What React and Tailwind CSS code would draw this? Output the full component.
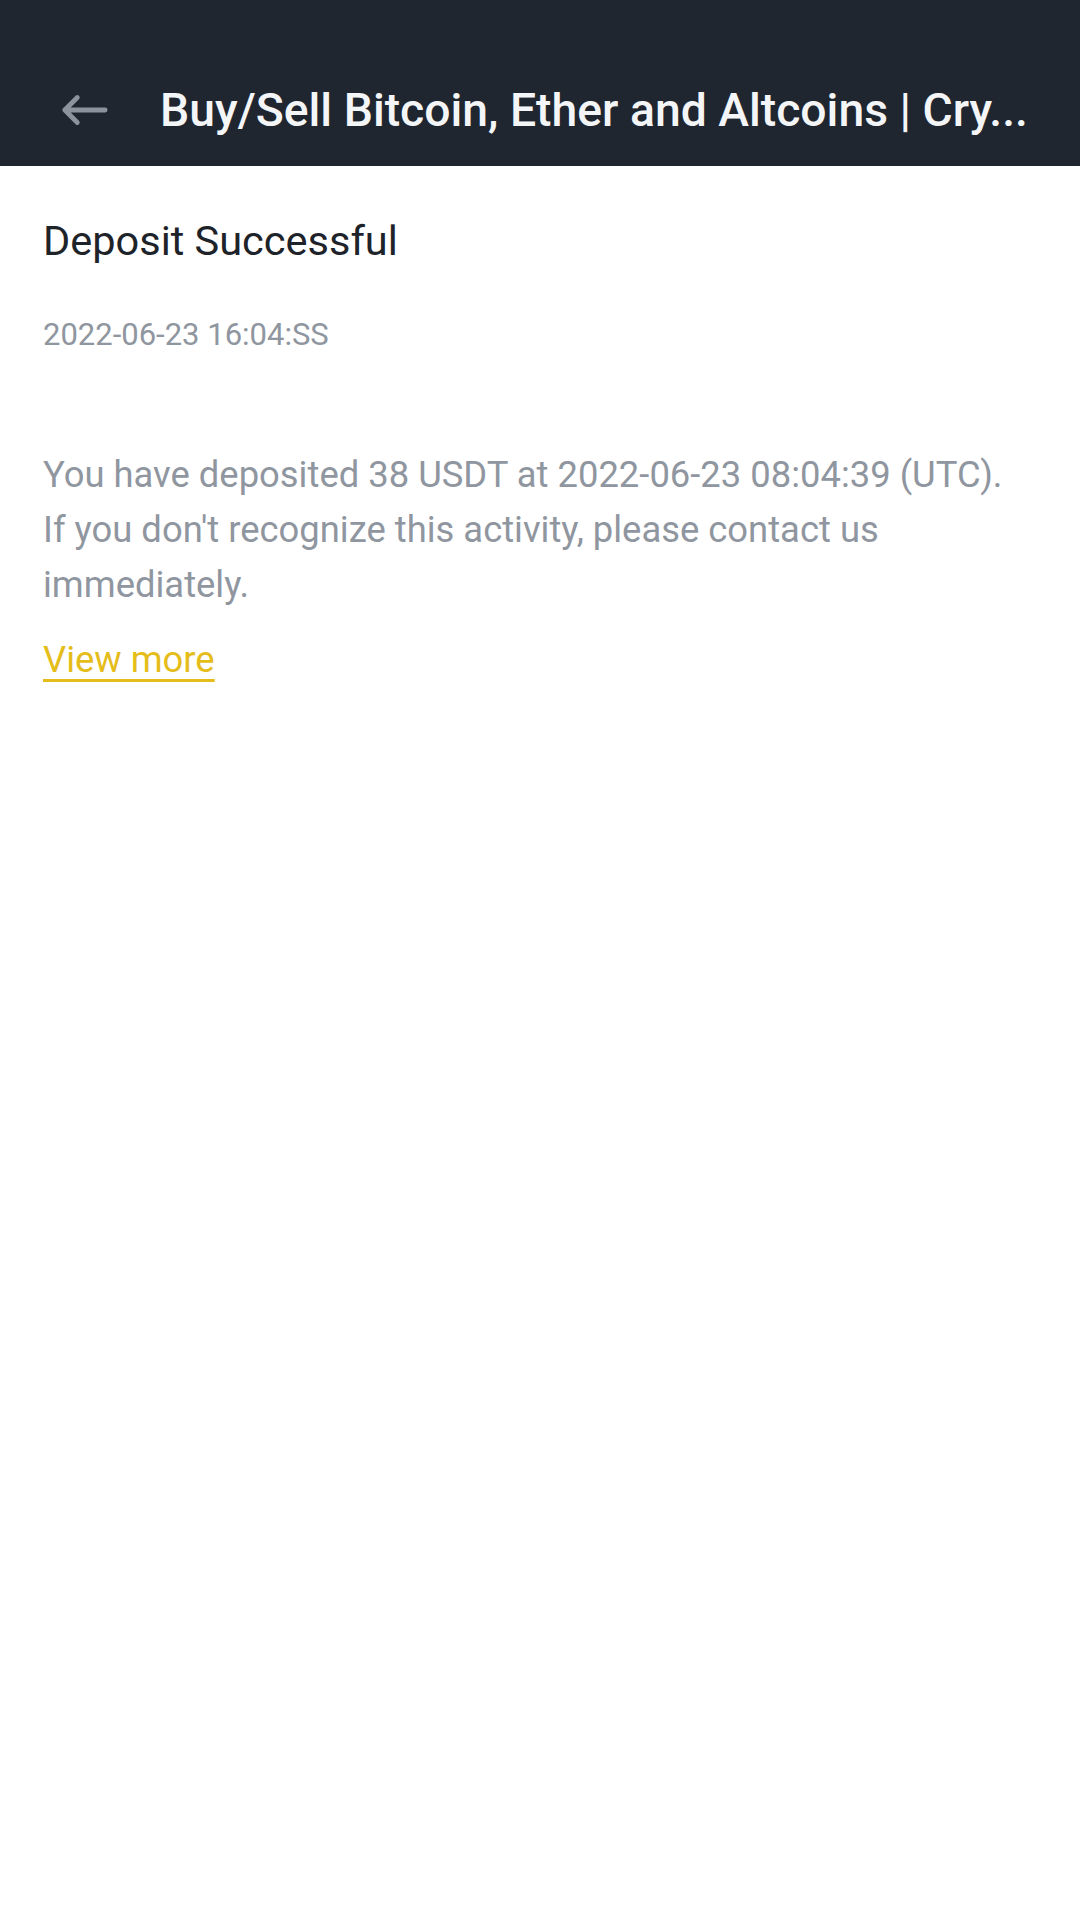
export default function App() {
  return (
    <div className="w-[1080px] h-[1920px] bg-white" style={{ fontFamily: '"Roboto", "Liberation Sans", sans-serif' }}>
      <div className="h-[166px] bg-[#1f2630] flex items-end">
        <div className="flex items-center h-[110px] w-full pb-[2px]">
          <div className="w-[160px] pl-[60px] flex items-center">
            <svg width="48" height="32" viewBox="0 0 50 32" fill="none">
              <path d="M47 16H5M18 3L5 16l13 13" stroke="#8d939c" strokeWidth="5" strokeLinecap="round" strokeLinejoin="round" />
            </svg>
          </div>
          <div className="text-[46.3px] font-medium text-[#f4f5f7] whitespace-nowrap leading-none">
            Buy/Sell Bitcoin, Ether and Altcoins | Cry...
          </div>
        </div>
      </div>
      <div className="px-[43px] pt-[50px]">
        <div className="text-[41.5px] text-[#1e2329] leading-[50px]">Deposit Successful</div>
        <div className="mt-[50px] text-[31px] text-[#8f96a0] leading-[38px]">2022-06-23 16:04:SS</div>
        <div className="mt-[93px] text-[36.4px] text-[#8f96a0] leading-[55px]">
          You have deposited 38 USDT at 2022-06-23 08:04:39 (UTC).
          <br />
          If you don't recognize this activity, please contact us
          <br />
          immediately.
        </div>
        <div className="mt-[26px] text-[36.4px] leading-[44px] text-[#e5bd1a] underline underline-offset-[7px]">View more</div>
      </div>
    </div>
  );
}
